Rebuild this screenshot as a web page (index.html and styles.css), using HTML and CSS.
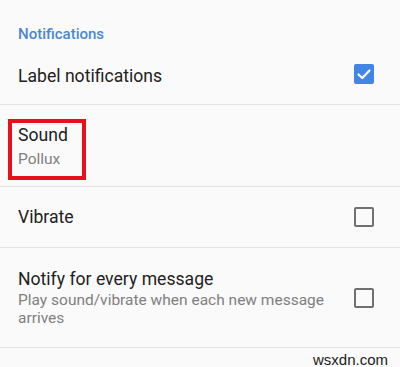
FILE: index.html
```html
<!DOCTYPE html>
<html>
<head>
<meta charset="utf-8">
<link rel="stylesheet" href="styles.css">
</head>
<body>
<div class="screen">
  <div class="header">Notifications</div>
  <div class="row row-label">
    <div class="title">Label notifications</div>
    <div class="check checked">
      <svg width="20" height="20" viewBox="0 0 20 20"><polyline points="4.5,10.5 8.3,14 15.5,6.5" fill="none" stroke="#fff" stroke-width="2.2" stroke-linecap="round" stroke-linejoin="round"/></svg>
    </div>
  </div>
  <div class="row row-sound">
    <div class="highlight">
      <div class="title">Sound</div>
      <div class="sub">Pollux</div>
    </div>
  </div>
  <div class="row row-vibrate">
    <div class="title">Vibrate</div>
    <div class="check"></div>
  </div>
  <div class="row row-notify">
    <div class="texts">
      <div class="title">Notify for every message</div>
      <div class="sub">Play sound/vibrate when each new message arrives</div>
    </div>
    <div class="check"></div>
  </div>
  <div class="watermark">wsxdn.com</div>
</div>
</body>
</html>
```
FILE: styles.css
```css
html, body {
  margin: 0;
  padding: 0;
  background: #fafafa;
}
.screen {
  width: 400px;
  height: 367px;
  font-family: Roboto, "Noto Sans", sans-serif;
  color: #212121;
  overflow: hidden;
}
.header {
  padding: 24px 18px 0;
  height: 20px;
  line-height: 20px;
  font-size: 15px;
  font-weight: 500;
  color: #4a88cf;
}
.row {
  display: flex;
  align-items: center;
  justify-content: space-between;
  padding: 0 26px 0 18px;
  border-bottom: 1px solid #e3e3e3;
}
.title {
  font-size: 17.6px;
  line-height: 22px;
}
.sub {
  font-size: 15.5px;
  line-height: 18px;
  color: #808080;
}
.row-label { height: 60px; }
.row-label .title { margin-top: 4px; }
.row-sound {
  height: 81px;
  padding-left: 8px;
  align-items: flex-start;
}
.row-vibrate { height: 60px; }
.row-notify { height: 99px; }
.highlight {
  box-sizing: border-box;
  width: 78px;
  height: 61px;
  margin-top: 14px;
  border: 4px solid #e8101a;
  padding: 1px 0 0 6px;
}
.highlight .sub {
  margin-top: 3px;
  line-height: 20px;
}
.texts { width: 320px; }
.texts .title { margin-bottom: 1px; }
.check {
  width: 16px;
  height: 16px;
  border: 2px solid #707070;
  border-radius: 2px;
  flex-shrink: 0;
}
.check.checked {
  width: 20px;
  height: 20px;
  border: none;
  background: #4285e4;
}
.check svg { display: block; }
.watermark {
  text-align: right;
  padding: 3px 12px 0 0;
  font-size: 15px;
  color: #1a1a1a;
  font-family: "Liberation Sans", Arial, sans-serif;
}
```
